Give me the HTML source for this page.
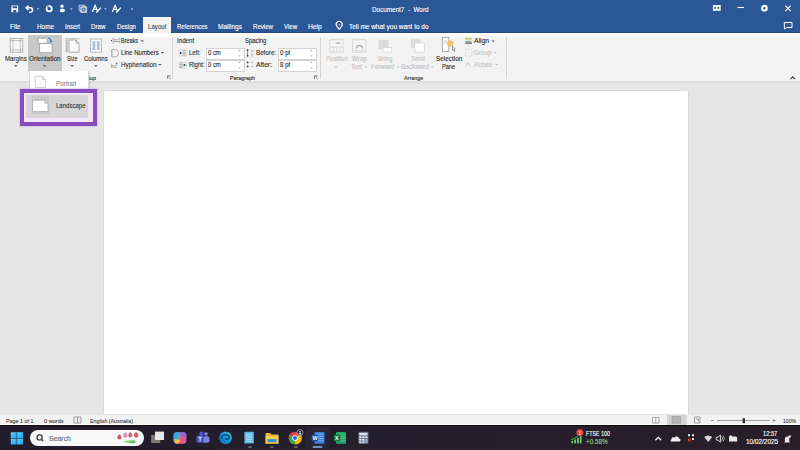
<!DOCTYPE html>
<html><head><meta charset="utf-8">
<style>
*{margin:0;padding:0;box-sizing:border-box}
html,body{width:800px;height:450px;overflow:hidden;background:#e6e6e6;font-family:"Liberation Sans",sans-serif;position:relative}
.a{position:absolute}
.t{position:absolute;white-space:nowrap;line-height:1;transform-origin:0 50%;-webkit-text-stroke:0.12px currentColor}
svg{position:absolute;overflow:visible}
</style></head><body>
<!-- base regions -->
<div class="a" style="left:0;top:0;width:800px;height:33px;background:#2b5797"></div>
<div class="a" style="left:0;top:32px;width:800px;height:1px;background:#234b86"></div>
<div class="a" style="left:0;top:33px;width:800px;height:48px;background:linear-gradient(#fff 0,#fff 3px,#f3f3f3 5px)"></div>
<div class="a" style="left:0;top:81px;width:800px;height:2px;background:#dedede"></div>
<div class="a" style="left:0;top:83px;width:800px;height:332px;background:#e6e6e6"></div>
<div class="a" style="left:104px;top:91px;width:584px;height:323px;background:#fff;box-shadow:1px 0 0 #d9d9d9,-1px -1px 0 #dcdcdc"></div>
<div class="a" style="left:0;top:414.5px;width:800px;height:10.5px;background:linear-gradient(#f2f2f2 0,#f2f2f2 8.5px,#fff 9.5px)"></div>
<div class="a" style="left:0;top:425px;width:800px;height:25px;background:linear-gradient(90deg,#221c2b,#241f2c 50%,#291e2a);border-top:1.2px solid #0e0c12"></div>

<!-- Layout tab bg -->
<div class="a" style="left:143px;top:17px;width:28px;height:17px;background:#f3f3f3"></div>
<!-- group separators -->
<div class="a" style="left:172px;top:37px;width:1px;height:42px;background:#d4d4d4"></div>
<div class="a" style="left:320px;top:37px;width:1px;height:42px;background:#d4d4d4"></div>
<div class="a" style="left:506px;top:37px;width:1px;height:42px;background:#d4d4d4"></div>
<!-- orientation selected -->
<div class="a" style="left:28px;top:35px;width:34px;height:36px;background:#c8c8c8"></div>
<!-- spin boxes -->
<div class="a" style="left:206px;top:47.5px;width:39px;height:12px;background:#fff;border:1px solid #d2d2d2"></div>
<div class="a" style="left:206px;top:59.5px;width:39px;height:12px;background:#fff;border:1px solid #d2d2d2"></div>
<div class="a" style="left:278px;top:47.5px;width:39px;height:12px;background:#fff;border:1px solid #d2d2d2"></div>
<div class="a" style="left:278px;top:59.5px;width:39px;height:12px;background:#fff;border:1px solid #d2d2d2"></div>

<!-- dropdown -->
<div class="a" style="z-index:5;left:28.5px;top:71px;width:60px;height:22px;background:#fff;border:1px solid #d6d6d6;border-top:none;box-shadow:1px 1px 1.5px rgba(0,0,0,0.12)"></div>
<div class="a" style="z-index:5;left:19.9px;top:88.8px;width:77.6px;height:37px;border:4.2px solid #8a4cbc;background:#f1e6fb;box-shadow:0 0 1px 1px rgba(200,160,240,0.35)"></div>
<div class="a" style="z-index:5;left:26.3px;top:95px;width:61.7px;height:23.2px;background:#d6d6d6"></div>
<div class="a" style="z-index:5;left:30.6px;top:95.2px;width:19.6px;height:20px;background:#cbcbcb;border:1px solid #d3d3d3"></div>

<!-- status bar print layout selected -->
<div class="a" style="left:666.5px;top:415px;width:20.5px;height:10px;background:#d4d4d4"></div>
<!-- search box -->
<div class="a" style="left:30px;top:430px;width:114px;height:15.5px;background:#f8f8f8;border-radius:8px"></div>
<!-- QAT icons (white) -->
<svg style="left:0;top:0" width="800" height="33" viewBox="0 0 800 33">
 <g fill="none" stroke="#fff" stroke-width="1">
  <!-- save -->
  <path d="M11.4 5.4h6.8v6.8h-6.8z" fill="#fff" stroke="none"/>
  <path d="M12.6 6.3h4.4v2h-4.4zM13.2 10h3.2v2.2h-3.2z" fill="#2b5797" stroke="none"/>
  <!-- undo -->
  <path d="M26.5 7.8h3.8a2.2 2.2 0 0 1 0 4.4h-1.3" stroke-width="1.6"/>
  <path d="M28.4 5.8l-2.2 2 2.2 2" stroke-width="1.6"/>
  <!-- redo circle -->
  <circle cx="49.2" cy="8.8" r="2.6" stroke-width="1.8"/><path d="M47.6 6.4l1.8 2.4" stroke="#2b5797" stroke-width="1.2"/>
  <!-- copy icon -->
  <path d="M79.2 5.2h5.6v5.6h-5.6z" stroke="#c9d5ea" stroke-width="0.9"/>
  <path d="M80.8 6.8h5.8v5.6h-5.8z" fill="#bccbe6" stroke="#dfe6f3" stroke-width="0.8"/>
  <circle cx="83.6" cy="9.6" r="1.5" stroke="#2b4f8a" stroke-width="1"/>
  <!-- minimize -->
  <path d="M737.6 7.5h6.4" stroke-width="1.1"/>
  <!-- close -->
  <path d="M785.3 5.7l5.4 5.3M790.7 5.7l-5.4 5.3" stroke-width="1.1"/>
  <!-- restore circle -->
  <circle cx="764.4" cy="8.2" r="2.3" stroke-width="2.2"/>
  <!-- comment -->
  <path d="M784.3 22.5h7.7v5h-5.5l-1.8 1.6v-1.6h-0.4z" stroke-width="1"/>
  <!-- lightbulb -->
  <path d="M339.2 29.4l-2.4-3.2a3 3 0 1 1 4.8 0z" stroke-width="1.1" stroke-linejoin="round"/><circle cx="339.2" cy="24.6" r="0.7" fill="#fff" stroke="none"/>
 </g>
 <g fill="#fff">
  <!-- person/touch -->
  <circle cx="62" cy="6.2" r="1.6"/>
  <ellipse cx="62.4" cy="10.4" rx="2.5" ry="1.9"/>
  <!-- dropdown arrows -->
  <path d="M36.6 8.2h2.6l-1.3 1.5z M70.3 8.2h2.6l-1.3 1.5z M104 8.2h2.6l-1.3 1.5z" fill="#c5d2ea"/>
  <circle cx="132" cy="9" r="0.8"/>
  <!-- ribbon display options -->
  <rect x="712.9" y="5" width="7.8" height="5.8" fill="#f4f6fb"/><circle cx="715.2" cy="7.9" r="0.9" fill="#1d3d70"/><circle cx="718.4" cy="7.9" r="0.9" fill="#1d3d70"/>
 </g>
 <g fill="none" stroke="#fff" stroke-width="1.2" stroke-linecap="round">
  <!-- A/ spelling -->
  <path d="M92.5 11.5l2.6-6.3 2.6 6.3M93.6 9.3h3"/>
  <path d="M96.5 12.3l4-4.3"/>
  <path d="M112.5 11.5l2.6-6.3 2.6 6.3M113.6 9.3h3"/>
  <path d="M116.5 12.3l4-4.3"/>
 </g>
</svg>

<!-- Ribbon icons -->
<svg style="left:0;top:33px" width="800" height="48" viewBox="0 33 800 48">
 <!-- Margins -->
 <g fill="none" stroke="#a4a4a4" stroke-width="0.8">
  <rect x="10.2" y="38.4" width="12.6" height="13.8" fill="#fafafa"/>
  <path d="M13 38.4v13.8M20.3 38.4v13.8M10.2 40.6h12.6M10.2 49.9h12.6" stroke="#a8a8a8" stroke-width="0.7"/>
 </g>
 <!-- Orientation -->
 <g>
  <path d="M38.2 38.3h7.5l1.5 1.5v3.5h-9z" fill="#fff" stroke="#9a9a9a" stroke-width="0.7"/>
  <path d="M39.6 43.5h10.8l1.8 1.8v7.4h-12.6z" fill="#fff" stroke="#999" stroke-width="0.8"/>
  <path d="M48.2 37.4c2 0.3 3.2 1.6 3.4 3.6l1-0.2-1.6 2.1-1.6-2 1 0.1c-0.3-1.3-1.2-2.2-2.4-2.4z" fill="#3d6fb3"/>
 </g>
 <!-- Size -->
 <g>
  <rect x="65.6" y="39.6" width="2.2" height="12.8" fill="#bdbdbd"/>
  <rect x="65.6" y="38.1" width="14" height="1.2" fill="#c8c8c8"/>
  <path d="M69 40h7l3 3v9.2h-10z" fill="#fafafa" stroke="#9a9a9a" stroke-width="0.8"/>
  <path d="M76 40v3h3" fill="none" stroke="#9a9a9a" stroke-width="0.8"/>
 </g>
 <!-- Columns -->
 <g>
  <rect x="90.6" y="39" width="11" height="13.2" fill="#fafafa" stroke="#acacac" stroke-width="0.8"/>
  <rect x="92.5" y="41.2" width="2.8" height="8.8" fill="#a9c1df"/>
  <rect x="96.9" y="41.2" width="2.8" height="8.8" fill="#a9c1df"/>
 </g>
 <!-- chevrons under big buttons -->
 <g fill="#555">
  <path d="M13.9 65.2h3.8l-1.9 1.9z M42.7 65.2h3.8l-1.9 1.9z M70.2 65.2h3.8l-1.9 1.9z M93.9 65.2h3.8l-1.9 1.9z"/>
  <path d="M140.4 40.2h3.4l-1.7 1.7z M160.7 52h3.4l-1.7 1.7z M158.2 64h3.4l-1.7 1.7z"/>
  <path d="M491.4 40.4h3.4l-1.7 1.7z"/>
 </g>
 <g fill="#c4c4c4">
  <path d="M334.6 66.4h2.8l-1.4 1.5z M364.6 66.4h2.8l-1.4 1.5z M396.6 66.4h2.8l-1.4 1.5z M430.6 66.4h2.8l-1.4 1.5z"/>
  <path d="M493.4 52h3.4l-1.7 1.7z M495 64h3.4l-1.7 1.7z"/>
 </g>
 <!-- Breaks -->
 <g fill="none" stroke="#a0a0a0" stroke-width="0.9">
  <path d="M113 37.8v2h6.8v-2M113 43.6v-2h6.8v2"/>
 </g>
 <circle cx="111.6" cy="40.6" r="0.7" fill="#333"/>
 <!-- Line numbers -->
 <path d="M111.7 49.6h3.5a3.3 3.6 0 0 1 0 7.2h-3.5z" fill="#fafafa" stroke="#a0a0a0" stroke-width="0.9"/>
 <path d="M112.6 50.4v5.6" stroke="#c0c0c0" stroke-width="0.7"/>
 <!-- Hyphenation -->
 <text x="110.8" y="68.2" font-size="5.6" font-family="Liberation Sans" fill="#777">bc</text>
 <path d="M116.6 62.2v2.6M115.6 63.5h2" stroke="#777" stroke-width="0.7"/>
 <!-- launchers -->
 <g fill="none" stroke="#555" stroke-width="0.7">
  <path d="M167.5 78.8v-3h3M168.2 76.5l2.4 2.4"/>
  <path d="M314.5 78.8v-3h3M315.2 76.5l2.4 2.4"/>
 </g>
 <!-- Indent icons -->
 <g>
  <rect x="179" y="49.8" width="7.3" height="6.3" fill="#ebebeb" stroke="#d8d8d8" stroke-width="0.6"/>
  <path d="M182.5 50.6h3.3M182.5 52.2h3.3M182.5 53.8h3.3M182.5 55.3h3.3" stroke="#a8a8a8" stroke-width="0.8"/>
  <circle cx="180.6" cy="52.9" r="1" fill="#2d3d52"/>
  <rect x="179" y="62.1" width="7.3" height="6" fill="#ebebeb" stroke="#d8d8d8" stroke-width="0.6"/>
  <path d="M179.5 62.9h3.3M179.5 64.5h3.3M179.5 66.1h3.3M179.5 67.6h3.3" stroke="#a8a8a8" stroke-width="0.8"/>
  <circle cx="184.5" cy="65.1" r="1" fill="#2d3d52"/>
 </g>
 <!-- Spacing icons -->
 <g>
  <path d="M247.6 50v6" stroke="#3a4a5e" stroke-width="0.6"/>
  <circle cx="247.6" cy="50.1" r="0.9" fill="#2d3d52"/>
  <circle cx="247.6" cy="55.8" r="0.9" fill="#2d3d52"/>
  <path d="M250.8 50.2h2.6M250.8 52h2.6M250.8 54.4h2.6M250.8 56h2.6" stroke="#b0b0b0" stroke-width="0.8"/>
  <circle cx="247.6" cy="62.4" r="0.9" fill="#2d3d52"/>
  <circle cx="247.6" cy="66.4" r="0.9" fill="#2d3d52"/>
  <path d="M250.8 62.4h2.6M250.8 66.4h2.6" stroke="#b0b0b0" stroke-width="0.8"/>
 </g>
 <!-- spinners -->
 <g fill="#666">
  <path d="M238.6 50.8h1.8l-0.9-1z M238.6 55.4h1.8l-0.9 1z M238.6 62.8h1.8l-0.9-1z M238.6 67.4h1.8l-0.9 1z"/>
  <path d="M310.6 50.8h1.8l-0.9-1z M310.6 55.4h1.8l-0.9 1z M310.6 62.8h1.8l-0.9-1z M310.6 67.4h1.8l-0.9 1z"/>
 </g>
 <!-- Arrange icons (disabled) -->
 <g fill="none" stroke="#d2d2d2" stroke-width="0.9">
  <rect x="330" y="39.8" width="13" height="12.3" fill="#f7f7f7"/>
  <path d="M330 47h13M333.5 47v5M337 47v5M340 47v5"/>
  <rect x="352.8" y="39.8" width="13.2" height="12.3" fill="#f7f7f7"/>
 </g>
 <rect x="335.8" y="42.2" width="4.5" height="1.6" fill="#b8b8b8"/>
 <path d="M356.4 48.5a3.2 3.2 0 0 1 6.4 0" fill="none" stroke="#a8a8a8" stroke-width="1.3"/>
 <path d="M353.5 50.3h11.5" stroke="#d0d0d0" stroke-width="0.8"/>
 <rect x="378.5" y="39.8" width="10" height="9.5" fill="#dcdcdc"/>
 <rect x="383" y="47.5" width="8.5" height="4.5" fill="#fff" stroke="#d6d6d6" stroke-width="0.8"/>
 <rect x="411" y="38.8" width="9.5" height="9" fill="#dcdcdc"/>
 <rect x="414.8" y="43" width="9.5" height="9.2" fill="#fff" stroke="#d6d6d6" stroke-width="0.8"/>
 <!-- Selection pane -->
 <rect x="442.3" y="37.5" width="6.5" height="14" fill="#fff" stroke="#999" stroke-width="0.8"/>
 <path d="M443.5 41h4M443.5 43h4" stroke="#b0b0b0" stroke-width="0.6"/>
 <circle cx="450.3" cy="43.5" r="3.2" fill="#f0c05a" opacity="0.9"/>
 <path d="M452.5 46.2l2.6 2.6-1 0.3 0.9 1.8-0.8 0.4-0.9-1.8-0.8 0.7z" fill="#fff" stroke="#444" stroke-width="0.5"/>
 <!-- Align / Group / Rotate -->
 <path d="M465.2 37.6h6.6v2.2h-6.6z" fill="#d9c68a"/>
 <path d="M465.6 40.8h5.8v1.6h-5.8z" fill="#8a9bb0"/>
 <path d="M465.2 43.2h6.8" stroke="#333" stroke-width="0.9"/>
 <rect x="465.4" y="49.3" width="6.5" height="6.8" fill="none" stroke="#cfcfcf" stroke-width="0.8" stroke-dasharray="1.2 0.8"/>
 <path d="M468 51.8l2 2" stroke="#d2d2d2" stroke-width="0.8"/>
 <path d="M466 66.5l2-4 2.3 4.6M466 63.5l1-1" fill="none" stroke="#c8c8c8" stroke-width="0.9"/>
 <!-- collapse ribbon -->
 <path d="M790.4 79.2l2.3-2.3 2.3 2.3" fill="none" stroke="#444" stroke-width="1.2"/>
</svg>
<div class="t" style="left:372.00px;top:5.58px;font-size:7px;color:#fff;transform:scaleX(0.904);">Document7 &nbsp;- &nbsp;Word</div>
<div class="t" style="left:10.00px;top:24.07px;font-size:6.3px;color:#fff;transform:scaleX(1.034);">File</div>
<div class="t" style="left:36.70px;top:24.07px;font-size:6.3px;color:#fff;transform:scaleX(1.012);">Home</div>
<div class="t" style="left:65.00px;top:24.07px;font-size:6.3px;color:#fff;transform:scaleX(0.952);">Insert</div>
<div class="t" style="left:91.00px;top:24.07px;font-size:6.3px;color:#fff;transform:scaleX(0.986);">Draw</div>
<div class="t" style="left:117.00px;top:24.07px;font-size:6.3px;color:#fff;transform:scaleX(0.969);">Design</div>
<div class="t" style="left:177.00px;top:24.07px;font-size:6.3px;color:#fff;transform:scaleX(0.947);">References</div>
<div class="t" style="left:218.00px;top:24.07px;font-size:6.3px;color:#fff;transform:scaleX(1.039);">Mailings</div>
<div class="t" style="left:253.00px;top:24.07px;font-size:6.3px;color:#fff;transform:scaleX(0.968);">Review</div>
<div class="t" style="left:284.00px;top:24.07px;font-size:6.3px;color:#fff;transform:scaleX(0.974);">View</div>
<div class="t" style="left:308.30px;top:24.07px;font-size:6.3px;color:#fff;transform:scaleX(1.058);">Help</div>
<div class="t" style="left:349.00px;top:24.07px;font-size:6.3px;color:#fff;transform:scaleX(1.023);">Tell me what you want to do</div>
<div class="t" style="left:147.50px;top:24.07px;font-size:6.3px;color:#505050;transform:scaleX(0.979);">Layout</div>
<div class="t" style="left:4.90px;top:55.50px;font-size:6.6px;color:#2e2e2e;transform:scaleX(0.925);">Margins</div>
<div class="t" style="left:28.90px;top:55.50px;font-size:6.6px;color:#2e2e2e;transform:scaleX(0.979);">Orientation</div>
<div class="t" style="left:66.90px;top:55.50px;font-size:6.6px;color:#2e2e2e;transform:scaleX(0.819);">Size</div>
<div class="t" style="left:84.10px;top:55.50px;font-size:6.6px;color:#2e2e2e;transform:scaleX(0.910);">Columns</div>
<div class="t" style="left:121.40px;top:38.26px;font-size:6.5px;color:#2e2e2e;transform:scaleX(0.845);">Breaks</div>
<div class="t" style="left:121.40px;top:49.86px;font-size:6.5px;color:#2e2e2e;transform:scaleX(0.934);">Line Numbers</div>
<div class="t" style="left:121.40px;top:61.86px;font-size:6.5px;color:#2e2e2e;transform:scaleX(0.970);">Hyphenation</div>
<div class="t" style="left:66.00px;top:75.65px;font-size:5.8px;color:#2e2e2e;transform:scaleX(0.990);">Page Setup</div>
<div class="t" style="left:176.70px;top:38.26px;font-size:6.5px;color:#2e2e2e;transform:scaleX(0.946);">Indent</div>
<div class="t" style="left:188.50px;top:49.86px;font-size:6.5px;color:#2e2e2e;transform:scaleX(0.901);">Left:</div>
<div class="t" style="left:188.50px;top:61.86px;font-size:6.5px;color:#2e2e2e;transform:scaleX(0.913);">Right:</div>
<div class="t" style="left:207.90px;top:49.86px;font-size:6.5px;color:#2e2e2e;transform:scaleX(0.908);">0 cm</div>
<div class="t" style="left:207.90px;top:61.86px;font-size:6.5px;color:#2e2e2e;transform:scaleX(0.908);">0 cm</div>
<div class="t" style="left:244.90px;top:38.26px;font-size:6.5px;color:#2e2e2e;transform:scaleX(0.911);">Spacing</div>
<div class="t" style="left:255.90px;top:49.86px;font-size:6.5px;color:#2e2e2e;transform:scaleX(0.959);">Before:</div>
<div class="t" style="left:255.90px;top:61.86px;font-size:6.5px;color:#2e2e2e;transform:scaleX(1.023);">After:</div>
<div class="t" style="left:279.70px;top:49.86px;font-size:6.5px;color:#2e2e2e;transform:scaleX(0.950);">0 pt</div>
<div class="t" style="left:279.70px;top:61.86px;font-size:6.5px;color:#2e2e2e;transform:scaleX(0.950);">8 pt</div>
<div class="t" style="left:229.50px;top:75.65px;font-size:5.8px;color:#2e2e2e;transform:scaleX(0.923);">Paragraph</div>
<div class="t" style="left:325.60px;top:55.50px;font-size:6.6px;color:#c4c4c4;transform:scaleX(0.933);">Position</div>
<div class="t" style="left:351.90px;top:55.50px;font-size:6.6px;color:#c4c4c4;transform:scaleX(0.959);">Wrap</div>
<div class="t" style="left:351.00px;top:63.60px;font-size:6.6px;color:#c4c4c4;transform:scaleX(0.910);">Text</div>
<div class="t" style="left:377.50px;top:55.50px;font-size:6.6px;color:#c4c4c4;transform:scaleX(0.935);">Bring</div>
<div class="t" style="left:370.60px;top:63.60px;font-size:6.6px;color:#c4c4c4;transform:scaleX(0.967);">Forward</div>
<div class="t" style="left:410.60px;top:55.50px;font-size:6.6px;color:#c4c4c4;transform:scaleX(0.896);">Send</div>
<div class="t" style="left:401.00px;top:63.60px;font-size:6.6px;color:#c4c4c4;transform:scaleX(0.967);">Backward</div>
<div class="t" style="left:435.60px;top:55.50px;font-size:6.6px;color:#2e2e2e;transform:scaleX(0.969);">Selection</div>
<div class="t" style="left:441.90px;top:63.60px;font-size:6.6px;color:#2e2e2e;transform:scaleX(0.850);">Pane</div>
<div class="t" style="left:474.40px;top:38.26px;font-size:6.5px;color:#2e2e2e;transform:scaleX(1.037);">Align</div>
<div class="t" style="left:474.40px;top:49.86px;font-size:6.5px;color:#c4c4c4;transform:scaleX(0.968);">Group</div>
<div class="t" style="left:474.40px;top:61.86px;font-size:6.5px;color:#c4c4c4;transform:scaleX(0.945);">Rotate</div>
<div class="t" style="left:403.75px;top:75.65px;font-size:5.8px;color:#2e2e2e;transform:scaleX(0.933);">Arrange</div>
<div class="t" style="left:55.90px;top:80.56px;font-size:6.5px;color:#8c8c8c;transform:scaleX(0.964);z-index:6">Portrait</div>
<div class="t" style="left:55.90px;top:102.76px;font-size:6.5px;color:#3a3a3a;transform:scaleX(0.927);z-index:6">Landscape</div>
<div class="t" style="left:5.80px;top:418.95px;font-size:5.8px;color:#4a4a4a;transform:scaleX(0.927);">Page 1 of 1</div>
<div class="t" style="left:43.80px;top:418.95px;font-size:5.8px;color:#4a4a4a;transform:scaleX(0.965);">0 words</div>
<div class="t" style="left:90.20px;top:418.95px;font-size:5.8px;color:#4a4a4a;transform:scaleX(0.912);">English (Australia)</div>
<div class="t" style="left:783.00px;top:418.95px;font-size:5.8px;color:#4a4a4a;transform:scaleX(0.877);">100%</div>
<div class="t" style="left:49.10px;top:435.80px;font-size:6.6px;color:#6a6a6a;transform:scaleX(1.052);">Search</div>
<div class="t" style="left:586.20px;top:431.07px;font-size:6.3px;color:#fff;transform:scaleX(0.846);">FTSE 100</div>
<div class="t" style="left:586.20px;top:439.37px;font-size:6.3px;color:#8fd48f;transform:scaleX(1.012);">+0.58%</div>
<div class="t" style="left:763.20px;top:430.72px;font-size:6.4px;color:#fff;transform:scaleX(0.894);">12:57</div>
<div class="t" style="left:746.00px;top:438.92px;font-size:6.4px;color:#fff;transform:scaleX(1.006);">10/02/2025</div><!-- dropdown icons -->
<svg style="left:0;top:0;z-index:6" width="100" height="130" viewBox="0 0 100 130">
 <path d="M35.2 76.2h7.2l3.2 3.2v8h-10.4z" fill="#fafafa" stroke="#c4c4c4" stroke-width="0.8"/>
 <path d="M42.4 76.2v3.2h3.2" fill="none" stroke="#c4c4c4" stroke-width="0.8"/>
 <path d="M32.6 100.2h12.2l3.2 3v8.4h-15.4z" fill="#fff" stroke="#a8a8a8" stroke-width="0.8"/>
 <path d="M44.8 100.2v3h3.2" fill="none" stroke="#a8a8a8" stroke-width="0.8"/>
</svg>
<!-- status bar icons -->
<svg style="left:0;top:414px" width="800" height="12" viewBox="0 414 800 12">
 <g fill="none" stroke="#888" stroke-width="0.8">
  <path d="M74 417h7v6h-7zM77.5 417v6"/>
  <path d="M652.5 417.5h6.5v5.5h-6.5zM655.7 417.5v5.5" stroke="#999"/>
  <rect x="672" y="416.6" width="8.6" height="6.6" fill="#b4b4b4" stroke="#9a9a9a" stroke-width="0.6"/>
  <path d="M694.5 417h5.5v6h-5.5zM696 419h2.5v2.5"/>
  <path d="M711 420.5h3M717 420.5h53M772.5 420.5h3M774 419v3"/>
 </g>
 <rect x="742.6" y="418.2" width="2.4" height="5" fill="#333"/>
</svg>
<!-- taskbar -->
<svg style="left:0;top:425px" width="800" height="25" viewBox="0 425 800 25">
 <defs>
  <linearGradient id="wg" x1="0" y1="0" x2="1" y2="1"><stop offset="0" stop-color="#63d0ff"/><stop offset="1" stop-color="#1f9be8"/></linearGradient>
 </defs>
 <!-- windows logo -->
 <g fill="url(#wg)">
  <rect x="10.8" y="432.2" width="5.9" height="5.9"/>
  <rect x="17.2" y="432.2" width="5.9" height="5.9"/>
  <rect x="10.8" y="438.6" width="5.9" height="5.9"/>
  <rect x="17.2" y="438.6" width="5.9" height="5.9"/>
 </g>
 <!-- search icon -->
 <circle cx="39.6" cy="437.4" r="2.6" fill="none" stroke="#333" stroke-width="1.2"/>
 <path d="M41.4 439.3l1.8 1.8" stroke="#333" stroke-width="1.3"/>
 <!-- flowers -->
 <g>
  <path d="M123 441.8c3-1.6 7-2 12.5-1.8l-1 2.6c-4 0.8-8 0.6-11.5-0.8z" fill="#9cd68a"/>
  <path d="M128 442.6c2.5-1.2 5-1.6 8-1.2l-1 1.6c-2.4 0.6-4.6 0.4-7-0.4z" fill="#5fb85a"/>
  <path d="M117.4 437.6c0-1.8 1-3 2-3.2 1 0.2 2 1.4 2 3.2 0 1.3-0.9 2-2 2s-2-0.7-2-2z" fill="#d4545a"/>
  <path d="M123.2 435.6c0-1.8 1-3 2.1-3.2 1.1 0.2 2.1 1.4 2.1 3.2 0 1.3-0.9 2.1-2.1 2.1s-2.1-0.8-2.1-2.1z" fill="#e08ac0"/>
  <path d="M128.2 435.4c0-1.8 1-3 2-3.2 1 0.2 2 1.4 2 3.2 0 1.3-0.9 2.1-2 2.1s-2-0.8-2-2.1z" fill="#c8707e"/>
  <path d="M134 435.4c0-1.8 1.1-3 2.2-3.2 1.1 0.2 2.2 1.4 2.2 3.2 0 1.3-1 2.1-2.2 2.1s-2.2-0.8-2.2-2.1z" fill="#d8606a"/>
 </g>
 <!-- task view -->
 <rect x="151.2" y="435" width="9" height="8" fill="#7a7a7a"/>
 <rect x="155" y="431.6" width="9" height="8.4" fill="#e8e8e8"/>
 <!-- copilot -->
 <path d="M176.5 432.2h6.5c2 0 3.4 1.2 3.4 3.2v5.4c0 1.8-1.4 3-3.2 3h-6.5c-1.8 0-3-1.2-3-3v-5.4c0-2 1.2-3.2 2.8-3.2z" fill="#e2588f"/>
 <path d="M176.5 432.2h4.5l-2.6 8.5c-0.4 1.4-1.6 2-2.6 2h-0.5c-1 0-1.8-0.8-1.8-2.4v-5c0-2 1.2-3.1 3-3.1z" fill="#3aa6e6"/>
 <path d="M173.6 439.6l2.2 4h3l1.5-4z" fill="#f2c23a"/>
 <path d="M181.4 432.2h2.2c1.6 0 2.8 1.2 2.8 3v1.6l-4.2 1z" fill="#9a5ce0"/>
 <path d="M178.2 436.2l2-0.5-1.6 5z" fill="#5fc36a"/>
 <!-- teams -->
 <circle cx="206" cy="434" r="1.8" fill="#7b83eb"/>
 <rect x="202.5" y="436.2" width="7" height="6.6" rx="2.5" fill="#7b83eb"/>
 <circle cx="201.5" cy="433.8" r="2.2" fill="#5059c9"/>
 <rect x="196.5" y="435.6" width="7.2" height="7.2" rx="1" fill="#4b53bc"/>
 <path d="M198.3 437.3h3.6M200.1 437.3v4.2" stroke="#fff" stroke-width="0.9"/>
 <!-- edge -->
 <defs><linearGradient id="eg" x1="0" y1="1" x2="1" y2="0"><stop offset="0" stop-color="#0b62b8"/><stop offset="0.6" stop-color="#1c9de0"/><stop offset="1" stop-color="#46c98a"/></linearGradient></defs>
 <circle cx="225.5" cy="437.8" r="6.4" fill="url(#eg)"/>
 <path d="M221.2 439c0-2.6 2-4.3 4.4-4.3 2.2 0 3.6 1.4 3.6 2.8 0 1-0.8 1.6-1.8 1.6h-2.2" fill="none" stroke="#0b3f7a" stroke-width="1.6" opacity="0.8"/>
 <!-- notepad-like blue -->
 <rect x="244.4" y="431.8" width="9.4" height="11.8" rx="0.6" fill="#5ab8e6"/>
 <path d="M245.8 434.2h6.6M245.8 436h6.6M245.8 437.8h6.6M245.8 439.6h6.6M245.8 441.4h6.6" stroke="#dff3fb" stroke-width="0.6"/>
 <rect x="248.2" y="446.4" width="3.6" height="1.2" rx="0.6" fill="#9e9aa6"/>
 <!-- file explorer -->
 <path d="M265.6 433h4.6l1.2 1.4h7v9.2h-12.8z" fill="#e8b93a"/>
 <rect x="265.6" y="436" width="12.8" height="7.6" fill="#f5cf4d"/>
 <rect x="267.5" y="439.2" width="9" height="3" fill="#2f8fd8"/>
 <rect x="270" y="446.4" width="3.6" height="1.2" rx="0.6" fill="#9e9aa6"/>
 <!-- chrome -->
 <circle cx="295" cy="438" r="6.3" fill="#e3413a"/>
 <path d="M295 438L289.5 441.2A6.3 6.3 0 0 0 295 444.3z" fill="#34a853"/>
 <path d="M295 438L300.5 434.8A6.3 6.3 0 0 1 301 441.5 6.3 6.3 0 0 1 295 444.3z" fill="#fbbc05"/>
 <path d="M295 438L289.5 441.2 289 434.5z" fill="#34a853"/>
 <circle cx="295" cy="438" r="2.8" fill="#fff"/>
 <circle cx="295" cy="438" r="2.1" fill="#1a73e8"/>
 <circle cx="300" cy="432.6" r="3" fill="#1b1f3a" stroke="#fff" stroke-width="0.5"/>
 <circle cx="300" cy="431.8" r="0.9" fill="#c8d8ff"/>
 <path d="M298.4 434.4a1.6 1.4 0 0 1 3.2 0z" fill="#c8d8ff"/>
 <rect x="294" y="446.4" width="3.6" height="1.2" rx="0.6" fill="#9e9aa6"/>
 <!-- word -->
 <rect x="306" y="426.5" width="24" height="22" rx="2" fill="#2a2534"/>
 <rect x="314.5" y="432" width="10" height="11.8" rx="0.8" fill="#3b7ddb"/>
 <path d="M316 434.2h7.5M316 436.4h7.5M316 438.6h7.5M316 440.8h7.5" stroke="#8fc0f5" stroke-width="0.8"/>
 <rect x="311.6" y="434.6" width="6.6" height="6.6" rx="0.6" fill="#1b4fa6"/>
 <text x="312.4" y="440.2" font-size="5.4" font-weight="bold" font-family="Liberation Sans" fill="#fff">W</text>
 <rect x="312.6" y="446.3" width="9.8" height="1.4" rx="0.7" fill="#8fb4f0"/>
 <!-- excel -->
 <rect x="336" y="432" width="10" height="11.8" rx="0.8" fill="#21a366"/>
 <path d="M338 434.2h7.5M338 436.4h7.5M338 438.6h7.5M338 440.8h7.5" stroke="#5bc58c" stroke-width="0.8"/>
 <rect x="333.8" y="434.6" width="6.6" height="6.6" rx="0.6" fill="#107c41"/>
 <text x="335" y="440.2" font-size="5.2" font-weight="bold" font-family="Liberation Sans" fill="#fff">X</text>
 <!-- calculator -->
 <rect x="358.3" y="431.8" width="10.2" height="12" rx="0.8" fill="#5c6b7c"/>
 <rect x="359.3" y="432.8" width="8.2" height="2.6" fill="#d7e2ee"/>
 <g fill="#e6eef6">
  <rect x="359.3" y="436.3" width="2.2" height="1.8"/><rect x="362.3" y="436.3" width="2.2" height="1.8"/><rect x="365.3" y="436.3" width="2.2" height="1.8"/>
  <rect x="359.3" y="438.9" width="2.2" height="1.8"/><rect x="362.3" y="438.9" width="2.2" height="1.8"/><rect x="365.3" y="438.9" width="2.2" height="4.2" fill="#9bb3cc"/>
  <rect x="359.3" y="441.4" width="2.2" height="1.8"/><rect x="362.3" y="441.4" width="2.2" height="1.8"/>
 </g>
 <!-- FTSE widget -->
 <g fill="#5fcf5f">
  <rect x="571.4" y="441" width="1.8" height="2.4"/>
  <rect x="574.2" y="439.5" width="1.8" height="3.9"/>
  <rect x="577" y="438" width="1.8" height="5.4"/>
  <rect x="579.8" y="436.2" width="1.8" height="7.2"/>
  <path d="M571 440l7-3.5" stroke="#5fcf5f" stroke-width="0.8"/>
 </g>
 <circle cx="579.8" cy="432.4" r="3.5" fill="#e0473e"/>
 <text x="578.6" y="434.6" font-size="5" font-family="Liberation Sans" fill="#fff">1</text>
 <!-- tray chevron -->
 <path d="M655.4 440.2l2.9-2.9 2.9 2.9" fill="none" stroke="#fff" stroke-width="1.3"/>
 <!-- onedrive -->
 <path d="M671.6 441.4h7.4a1.5 1.5 0 0 0 0-3 2.5 2.5 0 0 0-4.6-0.7 1.8 1.8 0 0 0-2.9 1.8 0.95 0.95 0 0 0 0 1.9z" fill="#f2f2f2"/>
 <!-- red tray icon -->
 <g fill="#e8e8e8"><rect x="688" y="434.2" width="2" height="2"/><rect x="692" y="434.2" width="2" height="2"/><rect x="692" y="438" width="2" height="2"/></g>
 <rect x="688" y="438.6" width="2.6" height="2.8" fill="#e3343b"/>
 <!-- wifi -->
 <path d="M704.2 437a6.5 6.5 0 0 1 8 0L708.2 442z" fill="#d8d8d8"/>
 <!-- speaker -->
 <path d="M716.2 437.2h1.8l2.4-2.2v7.2l-2.4-2.2h-1.8z" fill="none" stroke="#e6e6e6" stroke-width="0.9"/>
 <path d="M721.6 436.6a3 3 0 0 1 0 4M723 435.6a4.6 4.6 0 0 1 0 6" fill="none" stroke="#e6e6e6" stroke-width="0.7"/>
 <!-- battery/plug -->
 <path d="M729 441.6v-5l1.8-1.6 1.4 1.6h3.4a1.6 1.6 0 0 1 1.6 1.6v3.4z" fill="#e8e8e8"/>
 <!-- bell / notifications -->
 <path d="M784 442.6h6.2l-0.9-1.2v-2.6a2.2 2.2 0 0 0-4.4 0v2.6z" fill="#e6e6e6"/>
 <circle cx="789.6" cy="436.6" r="1.4" fill="#e6e6e6"/>
</svg>
</body></html>
